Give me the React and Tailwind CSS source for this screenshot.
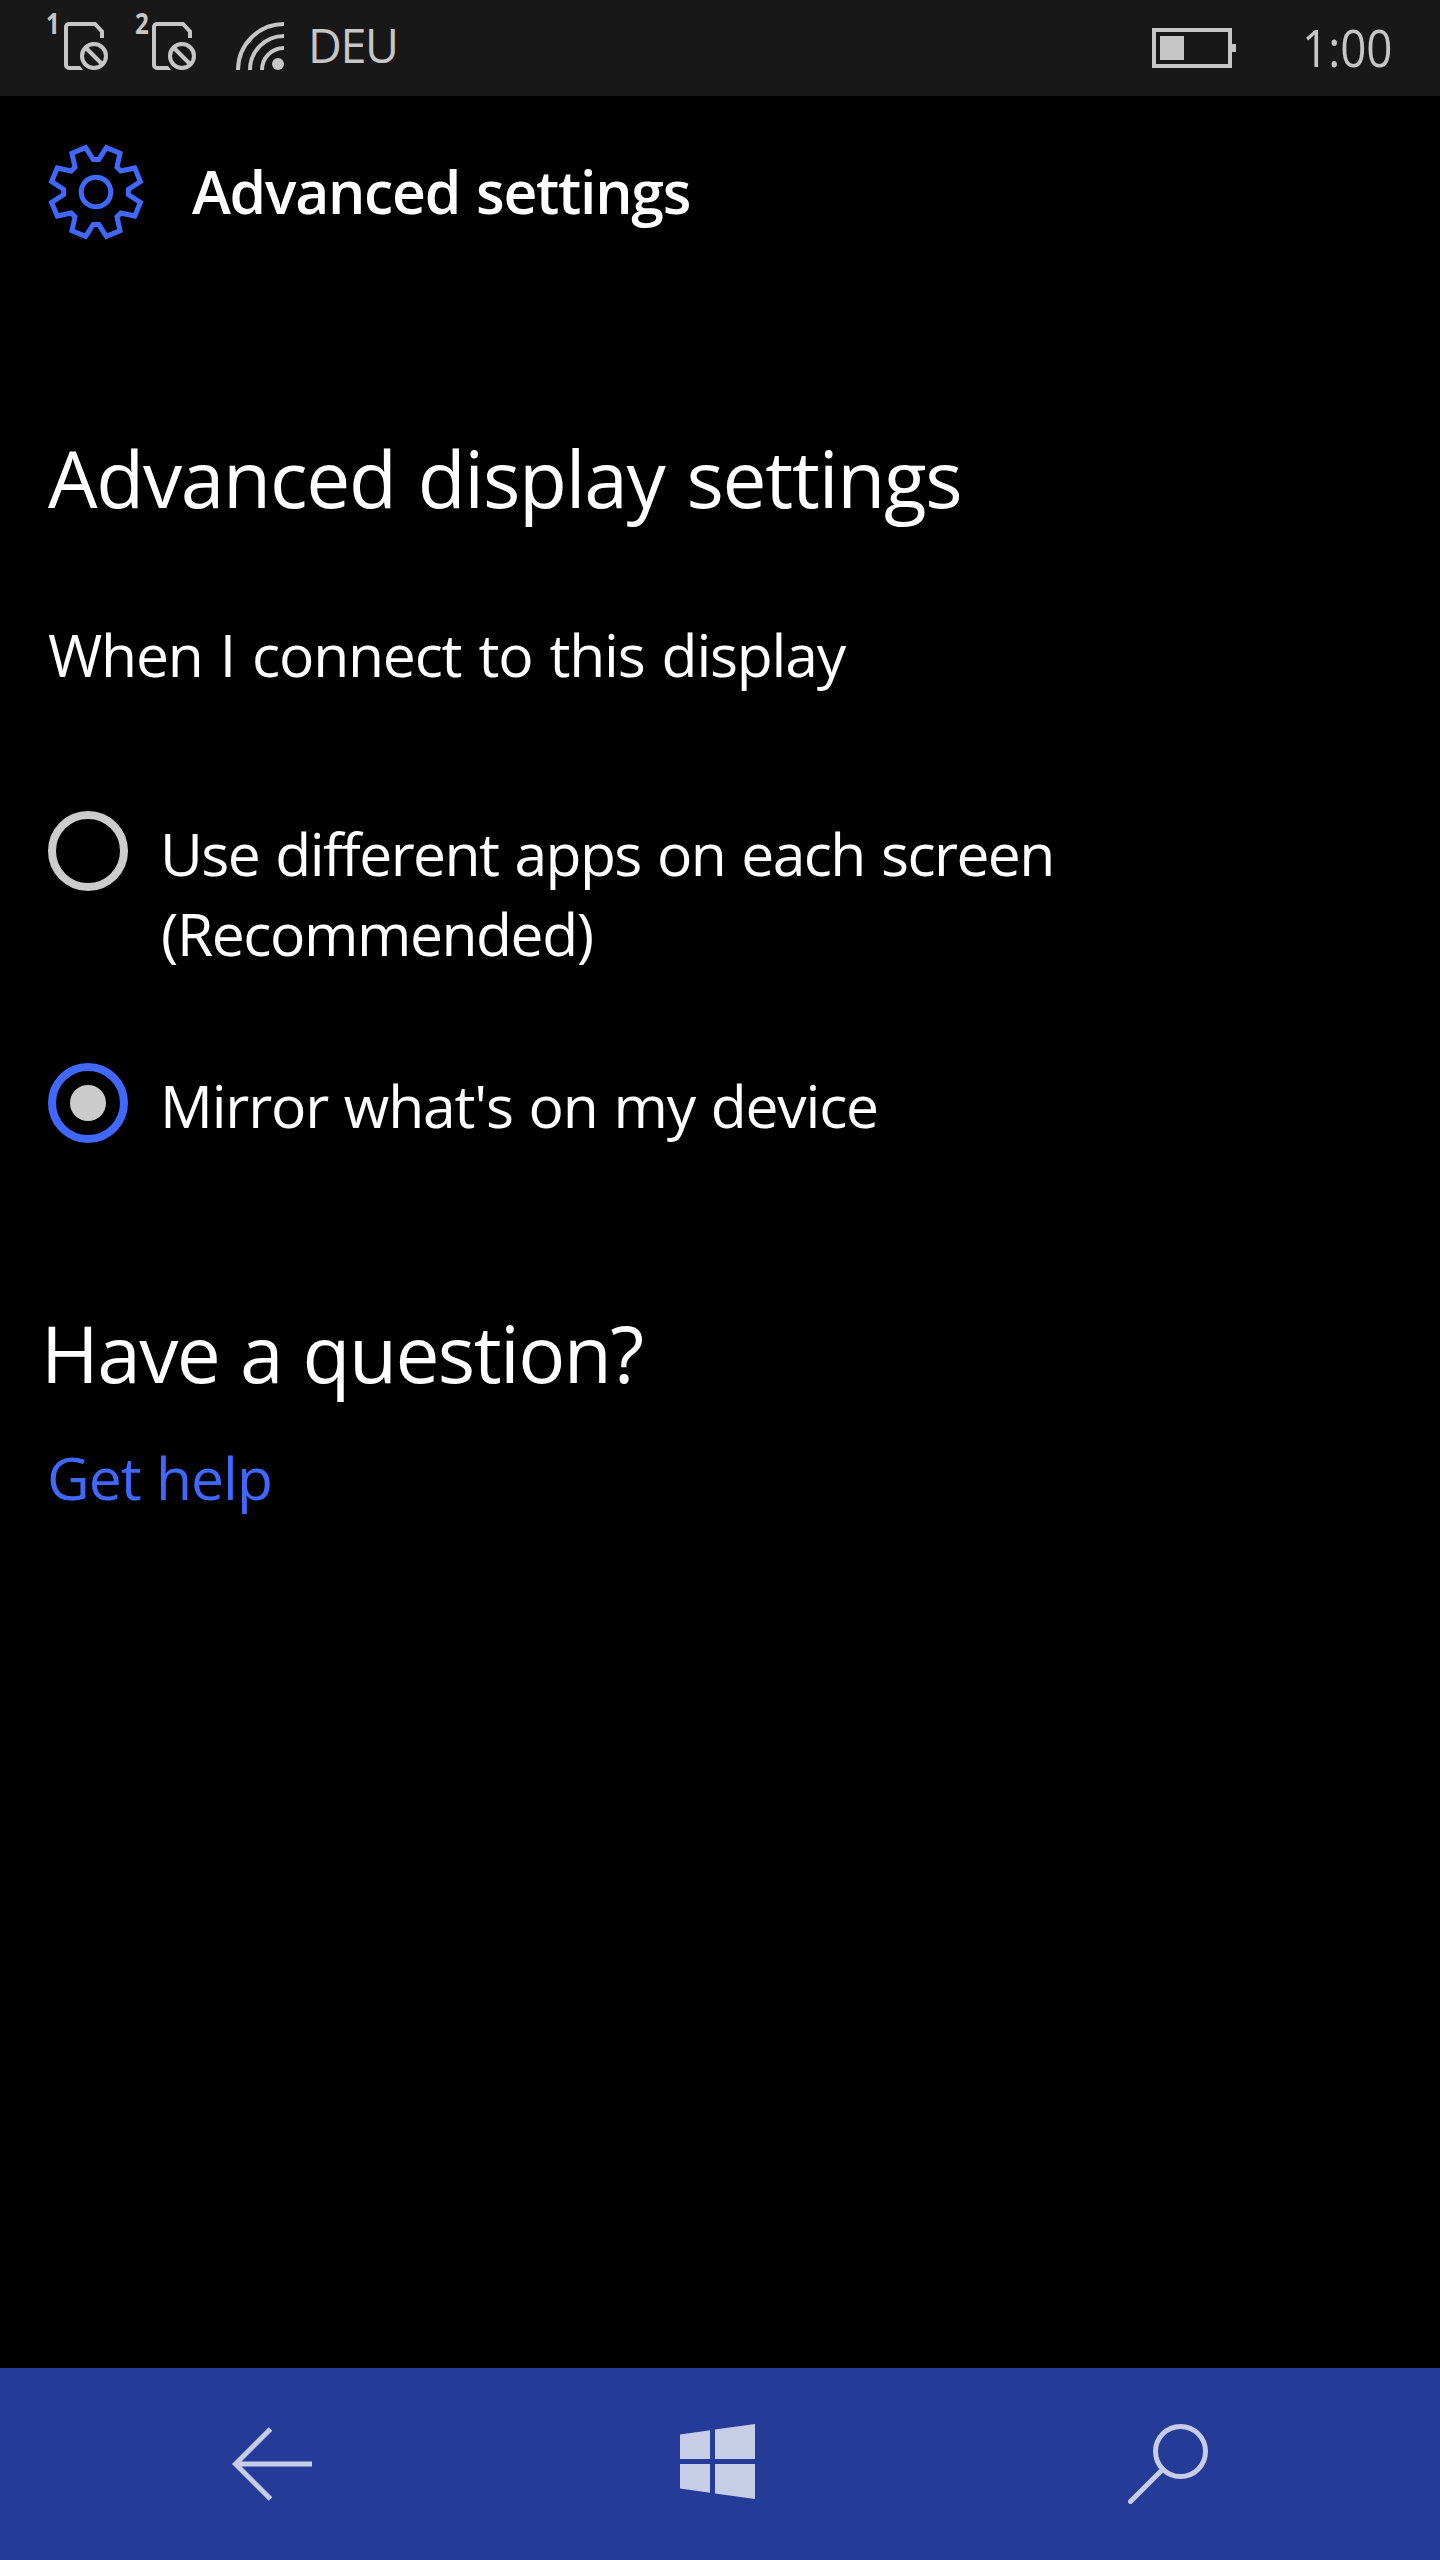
import React, { useState } from "react";

function SimIcon({ slot }) {
  return (
    <svg className="-ml-1 h-24 w-[92px] shrink-0" viewBox="-4 0 92 96" fill="none" stroke="currentColor" strokeWidth="4">
      <text
        transform={slot === 1 ? "translate(-2 34) scale(0.86 1)" : "translate(-1 34) scale(0.86 1)"}
        className="fill-current stroke-none font-['Open_Sans'] text-[28px] font-bold"
      >
        {slot}
      </text>
      <path d="M32 68H21a3 3 0 0 1-3-3V27a3 3 0 0 1 3-3h26l7 7.5V38" />
      <path d="M32 66l3 4h-4z" className="fill-current stroke-none" />
      <circle cx="46" cy="56" r="12" />
      <path d="M38 48l16 16" />
    </svg>
  );
}

function WifiIcon() {
  return (
    <svg className="h-24 w-12 shrink-0" viewBox="0 0 48 96" fill="none" stroke="currentColor" strokeWidth="4">
      <path d="M2 70A46 46 0 0 1 48 24M14 70A34 34 0 0 1 48 36M26 70A22 22 0 0 1 48 48" />
      <circle cx="42" cy="64" r="6" className="fill-current stroke-none" />
    </svg>
  );
}

function Battery() {
  return (
    <div className="flex items-center">
      <div className="h-10 w-20 border-4 border-[#c6c6c6] p-1">
        <div className="h-6 w-6 bg-[#c6c6c6]" />
      </div>
      <div className="h-2 w-1 bg-[#c6c6c6]" />
    </div>
  );
}

function gearOutline() {
  const pts = [];
  const polar = (r, deg) => {
    const a = (deg * Math.PI) / 180;
    return `${(r * Math.sin(a)).toFixed(2)},${(-r * Math.cos(a)).toFixed(2)}`;
  };
  for (let k = 0; k < 8; k++) {
    const base = k * 45;
    pts.push(polar(32.5, base - 4.8), polar(32.5, base + 4.8), polar(45.6, base + 13.2), polar(45.6, base + 31.8));
  }
  return pts.join(" ");
}

function GearIcon() {
  return (
    <svg className="h-24 w-24 shrink-0" viewBox="-48 -48 96 96" fill="none" stroke="#4068ff" strokeWidth="5">
      <polygon points={gearOutline()} />
      <circle r="14.8" />
    </svg>
  );
}

function RadioOption({ checked, onSelect, className = "", textClass, children }) {
  return (
    <button type="button" role="radio" aria-checked={checked} onClick={onSelect} className={`flex items-start text-left ${className}`}>
      <span
        className={`flex h-20 w-20 shrink-0 items-center justify-center rounded-full border-8 ${
          checked ? "border-[#4068ff]" : "border-[#cccccc]"
        }`}
      >
        {checked && <span className="h-9 w-9 rounded-full bg-[#cccccc]" />}
      </span>
      <span className={`mt-0.5 ml-8 text-[58.8px] leading-[80px] whitespace-nowrap ${textClass}`}>{children}</span>
    </button>
  );
}

export default function App() {
  const [mode, setMode] = useState("mirror");
  return (
    <div className="flex h-[2560px] w-[1440px] flex-col overflow-hidden bg-black font-['Open_Sans',sans-serif] text-white">
      <header className="flex h-24 shrink-0 items-center justify-between bg-[#181818] px-12 text-[#c6c6c6]">
        <div className="flex items-center">
          <SimIcon slot={1} />
          <SimIcon slot={2} />
          <div className="ml-3 flex items-center">
            <WifiIcon />
            <span className="ml-6 pb-[7px] text-[46.6px] leading-[56px] tracking-[-1.35px]">DEU</span>
          </div>
        </div>
        <div className="flex items-center">
          <Battery />
          <span className="ml-[66px] w-[90px] origin-left scale-x-[0.88] pb-[3px] text-[52px] leading-[60px]">1:00</span>
        </div>
      </header>

      <div className="flex h-48 shrink-0 items-center gap-12 pl-12">
        <GearIcon />
        <h1 className="pb-0.5 text-[58.8px] leading-[80px] font-semibold tracking-[-1.25px] [word-spacing:2px]">
          Advanced settings
        </h1>
      </div>

      <main className="flex flex-1 flex-col items-start pl-12">
        <h2 className="mt-[140px] text-[78.4px] leading-[100px] tracking-[-1.28px] [word-spacing:3px]">
          Advanced display settings
        </h2>
        <p className="mt-[86px] text-[58.8px] leading-[80px] tracking-[-1.2px] [word-spacing:3px]">
          When I connect to this display
        </p>
        <div role="radiogroup" className="mt-[117px] flex flex-col items-start">
          <RadioOption
            checked={mode === "extend"}
            onSelect={() => setMode("extend")}
            textClass="tracking-[-1.6px] [word-spacing:2.5px]"
          >
            Use different apps on each screen
            <br />
            <span className="ml-px tracking-[-1.45px]">(Recommended)</span>
          </RadioOption>
          <RadioOption
            checked={mode === "mirror"}
            onSelect={() => setMode("mirror")}
            className="mt-[90px]"
            textClass="tracking-[-1.2px] [word-spacing:1.75px]"
          >
            Mirror what's on my device
          </RadioOption>
        </div>
        <h2 className="mt-[158px] -ml-[7px] text-[78.4px] leading-[100px] tracking-[-1.6px] [word-spacing:2px]">
          Have a question?
        </h2>
        <a href="#help" className="mt-[34px] -ml-px text-[58.8px] leading-[80px] tracking-[-1px] [word-spacing:1px] text-[#4068ff]">
          Get help
        </a>
      </main>

      <nav className="flex h-48 shrink-0 items-center justify-between bg-[#243c98] px-[232px] text-[#c8cde7]">
        <button type="button" aria-label="Back">
          <svg className="h-20 w-20" viewBox="0 0 80 80" fill="none" stroke="currentColor" strokeWidth="5">
            <path d="M38.5 5L3.5 40l35 35M4 40h76" />
          </svg>
        </button>
        <button type="button" aria-label="Start">
          <svg className="h-20 w-20" viewBox="0 0 80 80" fill="currentColor">
            <path d="M0 10.5L30 6.2V35H0zM35 5.5L75 0v35H35zM0 40h30v28.8L0 64.5zM35 40h40v35L35 69.5z" />
          </svg>
        </button>
        <button type="button" aria-label="Search">
          <svg className="h-20 w-20" viewBox="0 0 80 80" fill="none" stroke="currentColor" strokeWidth="5">
            <circle cx="52.5" cy="27.5" r="25" />
            <path d="M34.5 45.5L2.5 77.5" strokeLinecap="round" />
          </svg>
        </button>
      </nav>
    </div>
  );
}
